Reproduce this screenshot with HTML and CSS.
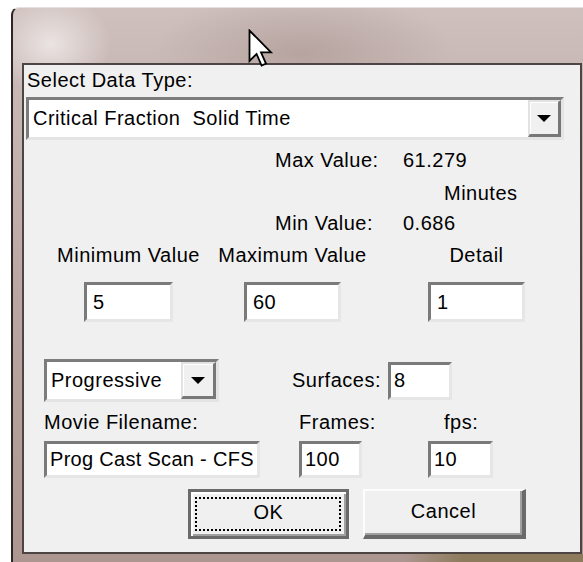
FILE: index.html
```html
<!DOCTYPE html>
<html lang="en">
<head>
<meta charset="utf-8">
<title>Movie Settings</title>
<link rel="stylesheet" href="styles.css">
</head>
<body>
<div class="window">
  <div class="client">
    <div class="caption">Select Data Type:</div>
    <div class="combo combo-type">
      <span class="combo-text">Critical Fraction&nbsp; Solid Time</span>
      <span class="drop"><i class="arrow"></i></span>
    </div>

    <div class="stats">
      <span>Max Value:</span><span>61.279</span>
      <span></span><span class="units">Minutes</span>
      <span>Min Value:</span><span>0.686</span>
    </div>

    <div class="ranges">
      <div class="field">
        <span>Minimum Value</span>
        <input class="edit w-min" type="text" value="5">
      </div>
      <div class="field">
        <span>Maximum Value</span>
        <input class="edit w-max" type="text" value="60">
      </div>
      <div class="field field-detail">
        <span>Detail</span>
        <input class="edit w-detail" type="text" value="1">
      </div>
    </div>

    <div class="mode-row">
      <div class="combo combo-mode">
        <span class="combo-text">Progressive</span>
        <span class="drop"><i class="arrow"></i></span>
      </div>
      <span class="surfaces-label">Surfaces:</span>
      <input class="edit surfaces" type="text" value="8">
    </div>

    <div class="movie-grid movie-labels">
      <span>Movie Filename:</span>
      <span>Frames:</span>
      <span class="fps-label">fps:</span>
    </div>
    <div class="movie-grid movie-edits">
      <input class="edit w-file" type="text" value="Prog Cast Scan - CFS">
      <input class="edit w-frames" type="text" value="100">
      <input class="edit w-fps" type="text" value="10">
    </div>

    <div class="buttons">
      <button class="btn btn-ok" type="button">OK</button>
      <button class="btn btn-cancel" type="button">Cancel</button>
    </div>
  </div>
</div>

<svg class="cursor" width="26" height="40" viewBox="0 0 26 40">
  <path d="M1.5 1.5 L1.5 32 L8.6 25 L13.6 36.5 L18 34.6 L13 23.4 L23 23.4 Z" fill="#fff" stroke="#000" stroke-width="1.8" stroke-linejoin="miter"/>
</svg>
</body>
</html>
```

FILE: styles.css
```css
body {
  margin: 0;
  background: #fff;
  font-family: "Liberation Sans", Arial, sans-serif;
  font-size: 20px;
  letter-spacing: 0.5px;
  color: #000;
}

/* Aero-style window frame around the dialog */
.window {
  box-sizing: border-box;
  width: 572px;
  height: 555px;
  margin: 7px 0 0 11px;
  padding: 55px 0 0 9px;
  border-left: 2px solid #2d2626;
  border-top: 1px solid #e6e0df;
  border-top-left-radius: 8px;
  background:
    radial-gradient(60px 50px at 38px 36px, rgba(238, 232, 231, 0.9), rgba(238, 232, 231, 0)),
    radial-gradient(150px 60px at 290px 45px, rgba(176, 156, 152, 0.75), rgba(176, 156, 152, 0)),
    linear-gradient(to right, rgba(142, 123, 93, 0) 390px, #8e7b5d 450px) bottom / 100% 8px no-repeat,
    linear-gradient(#cec0bd, #c9b9b6 60px, #baa5a0 300px, #ad9690);
}

.client {
  box-sizing: border-box;
  width: 560px;
  height: 491px;
  border: 2px solid #4d4444;
  background: #f0f0f0;
}

.caption {
  margin: 4px 0 0 3px;
  line-height: 22px;
}

/* Combo boxes */
.combo {
  display: flex;
  box-sizing: border-box;
  border: 3px solid;
  border-color: #7c7c7c #e4e4e4 #e4e4e4 #7c7c7c;
  background: #fff;
}

.combo-type {
  margin: 6px 0 0 2px;
  width: 538px;
  height: 43px;
}

.combo-text {
  flex: 1;
  display: flex;
  align-items: center;
  padding-left: 4px;
  white-space: pre;
}

.drop {
  box-sizing: border-box;
  width: 33px;
  display: flex;
  align-items: center;
  justify-content: center;
  border-style: solid;
  border-width: 2px 3px 3px 2px;
  border-color: #e2e2e2 #777 #777 #e2e2e2;
  box-shadow: inset 1px 1px 0 #fff;
  background: #f0f0f0;
}

.arrow {
  width: 0;
  height: 0;
  border-left: 7px solid transparent;
  border-right: 7px solid transparent;
  border-top: 7px solid #000;
}

/* Data range read-out */
.stats {
  display: grid;
  grid-template-columns: 128px auto;
  grid-template-rows: 33px 30px 22px;
  line-height: 22px;
  margin-top: 9px;
  padding-left: 251px;
}

.units {
  padding-left: 41px;
}

/* Edit fields */
.edit {
  box-sizing: border-box;
  margin: 0;
  padding: 0 4px;
  font: inherit;
  letter-spacing: inherit;
  color: #000;
  background: #fff;
  border: 3px solid;
  border-color: #7a7a7a #e6e6e6 #e6e6e6 #7a7a7a;
  border-radius: 0;
  outline: none;
}

.ranges {
  display: grid;
  grid-template-columns: 169px 159px 181px;
  margin-top: 10px;
  padding-left: 20px;
}

.field {
  display: flex;
  flex-direction: column;
  align-items: center;
  line-height: 22px;
}

.field-detail {
  padding-left: 28px;
}

.field .edit {
  margin-top: 16px;
  height: 40px;
  padding-left: 6px;
}

.w-min { width: 89px; }
.w-max { width: 97px; }
.w-detail { width: 97px; }

.mode-row {
  display: flex;
  align-items: center;
  margin-top: 37px;
  padding-left: 20px;
}

.combo-mode {
  width: 175px;
  height: 43px;
}

.combo-mode .combo-text {
  padding-left: 4px;
}

.combo-mode .drop {
  width: 35px;
}

.surfaces-label {
  margin-left: 73px;
  width: 96px;
}

.surfaces {
  width: 64px;
  height: 38px;
  padding-left: 3px;
}

.movie-grid {
  display: grid;
  grid-template-columns: 255px 129px auto;
  padding-left: 20px;
}

.movie-labels {
  margin-top: 9px;
  line-height: 22px;
}

.fps-label {
  padding-left: 16px;
}

.movie-edits {
  margin-top: 8px;
}

.movie-edits .edit {
  height: 37px;
  padding-left: 3px;
}

.w-file { width: 216px; letter-spacing: 0.3px; }
.w-frames { width: 63px; }
.w-fps { width: 65px; }

/* Push buttons */
.buttons {
  display: flex;
  gap: 14px;
  margin-top: 11px;
  padding-left: 164px;
}

.btn {
  box-sizing: border-box;
  height: 50px;
  margin: 0;
  padding: 0 0 4px;
  font: inherit;
  letter-spacing: inherit;
  color: #000;
  background: #f0f0f0;
}

.btn-ok {
  position: relative;
  width: 161px;
  border: 3px solid #6a6a6a;
  box-shadow: inset 2px 2px 0 #fff, inset -2px -2px 0 #a0a0a0;
}

.btn-ok::after {
  content: "";
  position: absolute;
  left: 4px;
  top: 5px;
  right: 5px;
  bottom: 5px;
  border: 2px dotted #000;
}

.btn-cancel {
  width: 163px;
  border-style: solid;
  border-width: 2px 4px 4px 2px;
  border-color: #fdfdfd #6a6a6a #6a6a6a #fdfdfd;
  box-shadow: inset -2px -2px 0 #a0a0a0;
}

/* Mouse pointer resting over the title bar */
.cursor {
  position: absolute;
  left: 248px;
  top: 29px;
}
```
